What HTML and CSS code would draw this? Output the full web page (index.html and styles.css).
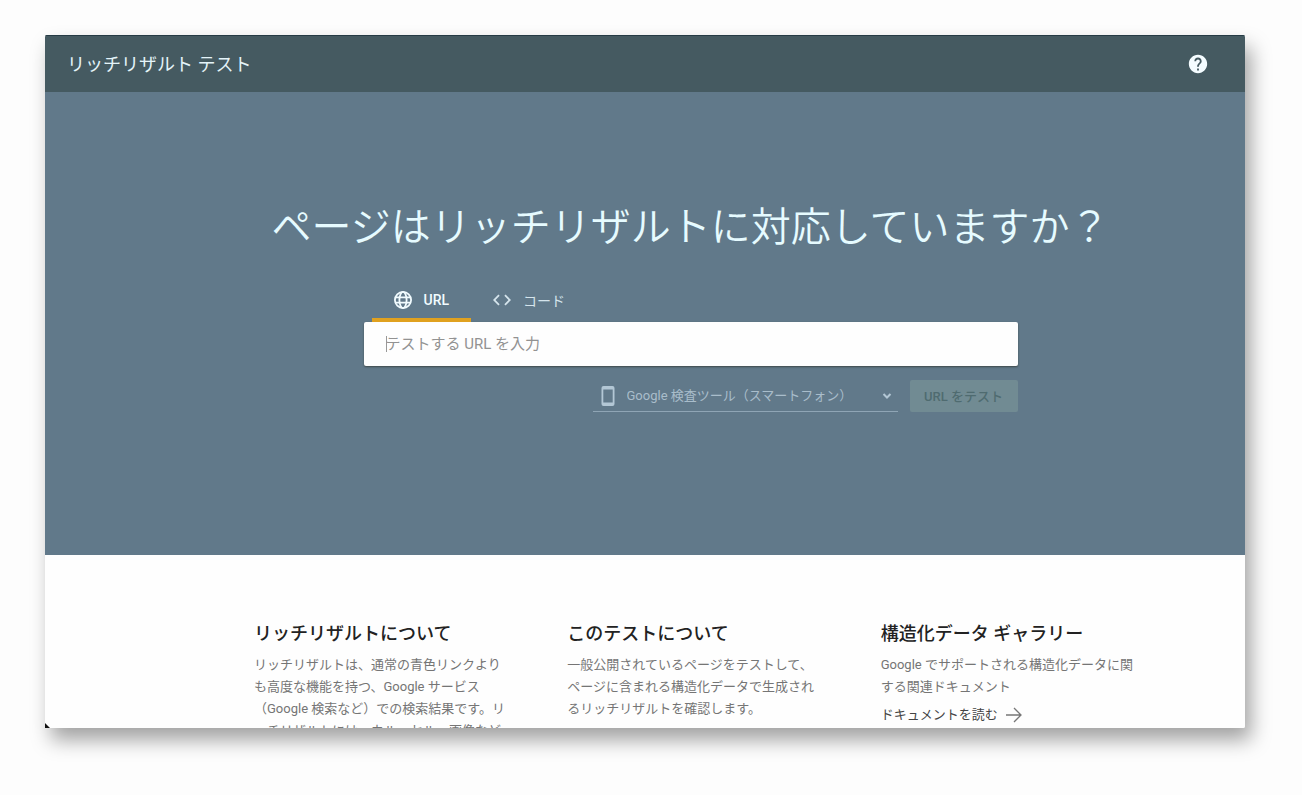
FILE: index.html
```html
<!DOCTYPE html>
<html lang="ja">
<head>
<meta charset="utf-8">
<meta name="viewport" content="width=device-width, initial-scale=1">
<title>リッチリザルト テスト</title>
<link rel="stylesheet" href="styles.css">
</head>
<body>
<div class="window">
  <header class="topbar">
    <span class="topbar-title">リッチリザルト テスト</span>
    <button class="help" type="button" aria-label="ヘルプ">
      <svg viewBox="0 0 24 24" width="22" height="22" fill="currentColor" aria-hidden="true"><path d="M12 2C6.48 2 2 6.48 2 12s4.48 10 10 10 10-4.480 10-10S17.520 2 12 2zm1 17h-2v-2h2v2zm2.070-7.750-.9.920C13.450 12.900 13 13.500 13 15h-2v-.5c0-1.100.450-2.100 1.170-2.830l1.240-1.260c.370-.360.590-.860.590-1.410 0-1.100-.9-2-2-2s-2 .9-2 2H8c0-2.210 1.790-4 4-4s4 1.790 4 4c0 .880-.360 1.680-.930 2.250z"/></svg>
    </button>
  </header>
  <main>
    <section class="hero">
      <h1 class="hero-title">ページはリッチリザルトに対応していますか？</h1>
      <form class="tester">
        <div class="tabs" role="tablist">
          <button class="tab tab-active" type="button" role="tab" aria-selected="true">
            <svg class="tab-icon" viewBox="2 2 20 20" fill="none" stroke="currentColor" stroke-width="2" aria-hidden="true"><circle cx="12" cy="12" r="9"/><ellipse cx="12" cy="12" rx="4" ry="9"/><path d="M3.500 9h17M3.500 15h17"/></svg>
            URL
          </button>
          <button class="tab" type="button" role="tab" aria-selected="false">
            <svg class="tab-icon" viewBox="2 2 20 20" fill="currentColor" aria-hidden="true"><path d="M9.400 16.600 4.800 12l4.600-4.600L8 6l-6 6 6 6 1.400-1.400zm5.200 0 4.600-4.600-4.600-4.600L16 6l6 6-6 6-1.400-1.400z"/></svg>
            コード
          </button>
        </div>
        <input class="url-input" type="text" placeholder="テストする URL を入力" aria-label="テストする URL を入力" autofocus>
        <div class="actions">
          <label class="agent">
            <svg class="agent-phone" viewBox="0 0 14 20" width="14" height="20" aria-hidden="true"><path fill="currentColor" fill-rule="evenodd" d="M2.500 0h9A2 2 0 0 1 13.500 2v16a2 2 0 0 1-2 2h-9a2 2 0 0 1-2-2V2a2 2 0 0 1 2-2zM2.300 3.500v13h9.400v-13z"/></svg>
            <select class="agent-select" aria-label="ユーザー エージェント">
              <option>Google 検査ツール（スマートフォン）</option>
            </select>
            <svg class="agent-arrow" viewBox="0 0 10 6" width="10" height="6" fill="none" stroke="currentColor" stroke-width="2" aria-hidden="true"><path d="M1.500 1 5 4.500 8.500 1"/></svg>
          </label>
          <button class="submit" type="submit" disabled>URL をテスト</button>
        </div>
      </form>
    </section>
    <section class="info">
      <article class="card">
        <h2 class="card-title">リッチリザルトについて</h2>
        <p class="card-text">リッチリザルトは、通常の青色リンクよりも高度な機能を持つ、Google サービス（Google 検索など）での検索結果です。リッチリザルトには、カルーセル、画像など</p>
      </article>
      <article class="card">
        <h2 class="card-title">このテストについて</h2>
        <p class="card-text">一般公開されているページをテストして、ページに含まれる構造化データで生成されるリッチリザルトを確認します。</p>
      </article>
      <article class="card">
        <h2 class="card-title">構造化データ ギャラリー</h2>
        <p class="card-text">Google でサポートされる構造化データに関する関連ドキュメント</p>
        <a class="card-link" href="#">ドキュメントを読む
          <svg viewBox="0 0 16 16" width="16" height="16" fill="none" stroke="currentColor" stroke-width="1.300" aria-hidden="true"><path d="M0 8h15M8 1l7 7-7 7"/></svg>
        </a>
      </article>
    </section>
  </main>
</div>
</body>
</html>
```
FILE: styles.css
```css
* {
  box-sizing: border-box;
}

body {
  margin: 0;
  height: 100vh;
  padding: 35px 57px 67px 45px;
  background: #fdfdfd;
  font-family: Roboto, "Noto Sans CJK JP", sans-serif;
  font-size: 13px;
}

button,
input,
select {
  font: inherit;
}

.window {
  height: 100%;
  overflow: hidden;
  background: linear-gradient(45deg, #111 3px, #fefefe 4px);
  border-radius: 2px 2px 2px 0;
  box-shadow: 6px 12px 20px rgba(0, 0, 0, 0.36);
}

.topbar {
  display: flex;
  align-items: center;
  justify-content: space-between;
  height: 57px;
  padding: 0 36px 0 22px;
  border-top: 1px solid #263b45;
  background: #455a61;
  color: #e4f4f9;
}

.topbar-title {
  padding-bottom: 2px;
  font-size: 18px;
}

.help {
  display: flex;
  padding: 0;
  border: 0;
  background: none;
  color: #f4fcff;
}

.hero {
  display: flex;
  flex-direction: column;
  align-items: center;
  padding: 108px 2px 143px 93px;
  background: #61798a;
}

.hero-title {
  margin: 0 0 24px;
  color: #e6fbff;
  font-family: Roboto, "Noto Sans CJK JP DemiLight", "Noto Sans CJK JP", sans-serif;
  font-size: 40px;
  font-weight: 350;
  line-height: 56px;
}

.tester {
  width: 654px;
  max-width: 100%;
}

.tabs {
  display: flex;
  padding-left: 8px;
}

.tab {
  display: flex;
  align-items: center;
  gap: 12px;
  height: 42px;
  padding: 1px 22px 0;
  border: 0;
  border-bottom: 4px solid transparent;
  background: none;
  color: #d5e4ec;
  font-size: 14px;
}

.tab-active {
  border-bottom-color: #e0a11f;
  color: #f2fcff;
  font-weight: 500;
}

.tab-icon {
  width: 18px;
  height: 18px;
}

.url-input {
  display: block;
  width: 100%;
  height: 44px;
  padding: 0 22px;
  border: 0;
  border-radius: 2px;
  outline: 0;
  background: linear-gradient(#999, #999) 22px center / 1px 16px no-repeat #fefefe;
  box-shadow: 0 1px 2px rgba(40, 40, 30, 0.6);
  caret-color: transparent;
  color: #333;
  font-size: 15px;
}

.url-input::placeholder {
  color: #929292;
}

.actions {
  display: flex;
  justify-content: flex-end;
  gap: 12px;
  margin-top: 14px;
}

.agent {
  display: flex;
  align-items: center;
  gap: 12px;
  width: 305px;
  height: 32px;
  padding: 0 6px 0 8px;
  border-bottom: 1px solid #8fa5b5;
  color: #b3c7d5;
}

.agent-select {
  flex: 1;
  min-width: 0;
  padding: 0;
  border: 0;
  appearance: none;
  background: none;
  color: #a9bdcb;
}

.submit {
  width: 108px;
  height: 32px;
  padding: 0 0 2px;
  border: 0;
  border-radius: 2px;
  background: #718b93;
  color: #4f6b70;
  font-weight: 500;
}

.info {
  display: grid;
  grid-template-columns: repeat(3, 1fr);
  padding: 65px 51px 0 209px;
}

.card {
  padding-right: 58px;
}

.card-title {
  margin: 0 0 6px;
  color: #222;
  font-size: 18px;
  font-weight: 500;
  line-height: 28px;
}

.card-text {
  margin: 0;
  color: #757575;
  line-height: 22px;
}

.card-link {
  display: flex;
  align-items: center;
  gap: 8px;
  margin-top: 6px;
  color: #444;
  line-height: 22px;
  text-decoration: none;
}

.card-link svg {
  color: #777;
}
```
